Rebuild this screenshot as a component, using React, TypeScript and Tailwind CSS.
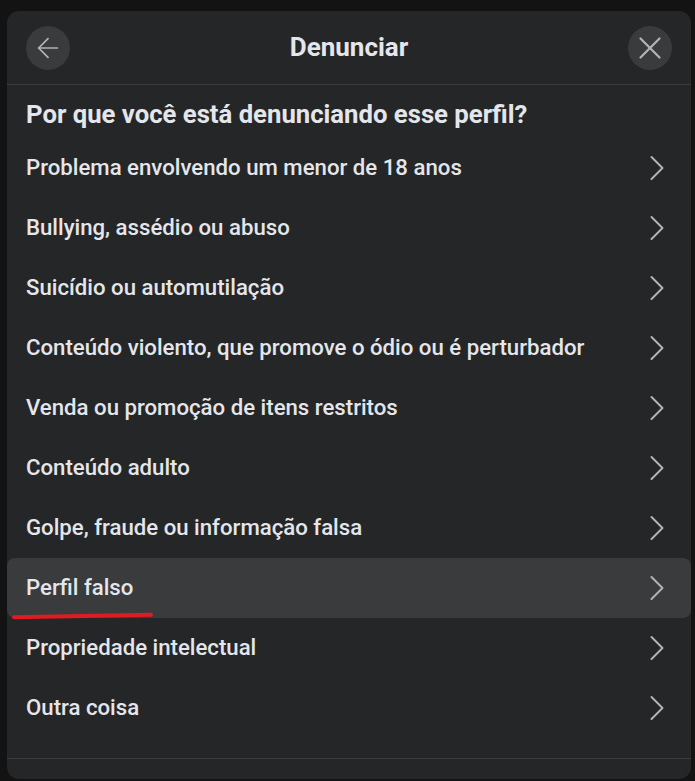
import { ArrowLeft, X, ChevronRight } from 'lucide-react';

const reasons = [
  'Problema envolvendo um menor de 18 anos',
  'Bullying, assédio ou abuso',
  'Suicídio ou automutilação',
  'Conteúdo violento, que promove o ódio ou é perturbador',
  'Venda ou promoção de itens restritos',
  'Conteúdo adulto',
  'Golpe, fraude ou informação falsa',
  'Perfil falso',
  'Propriedade intelectual',
  'Outra coisa',
];

export default function App() {
  return (
    <div
      className="w-[695px] h-[781px] bg-[#131313] pl-[7px] pr-[4px] pt-[11px] pb-[2px]"
      style={{ fontFamily: 'Roboto, "Noto Sans", sans-serif' }}
    >
      <div className="h-full flex flex-col bg-[#252628] rounded-xl overflow-hidden text-[#e4e6eb]">
        {/* header */}
        <div className="h-[74px] flex items-center justify-between px-[19px] border-b border-[#3a3b3d] shrink-0">
          <button className="w-11 h-11 rounded-full bg-[#3a3b3c] flex items-center justify-center">
            <ArrowLeft size={32} strokeWidth={1.3} className="text-[#b0b3b8]" />
          </button>
          <span className="text-[26px] font-bold">Denunciar</span>
          <button className="w-11 h-11 rounded-full bg-[#3a3b3c] flex items-center justify-center">
            <X size={38} strokeWidth={1.4} className="text-[#b0b3b8]" />
          </button>
        </div>

        {/* body */}
        <div className="flex-1 flex flex-col">
          <h2 className="text-[25.7px] font-bold px-[19px] pt-[14px] pb-[9px] leading-[30px]">
            Por que você está denunciando esse perfil?
          </h2>
          <ul className="flex flex-col">
            {reasons.map((r) => {
              const active = r === 'Perfil falso';
              return (
                <li
                  key={r}
                  className={
                    'relative h-[60px] flex items-center justify-between pl-[19px] pr-[12px] rounded-lg ' +
                    (active ? 'bg-[#3a3b3c]' : '')
                  }
                >
                  <span className="text-[22.2px] font-medium">{r}</span>
                  <ChevronRight size={44} strokeWidth={1.1} className="text-[#b0b3b8]" />
                  {active && (
                    <span className="absolute left-[5px] top-[56px] w-[141px] h-[4px] bg-[#e01b22] rounded-full -rotate-1" />
                  )}
                </li>
              );
            })}
          </ul>
        </div>

        {/* footer */}
        <div className="h-[21px] border-t border-[#3a3b3d] shrink-0" />
      </div>
    </div>
  );
}
